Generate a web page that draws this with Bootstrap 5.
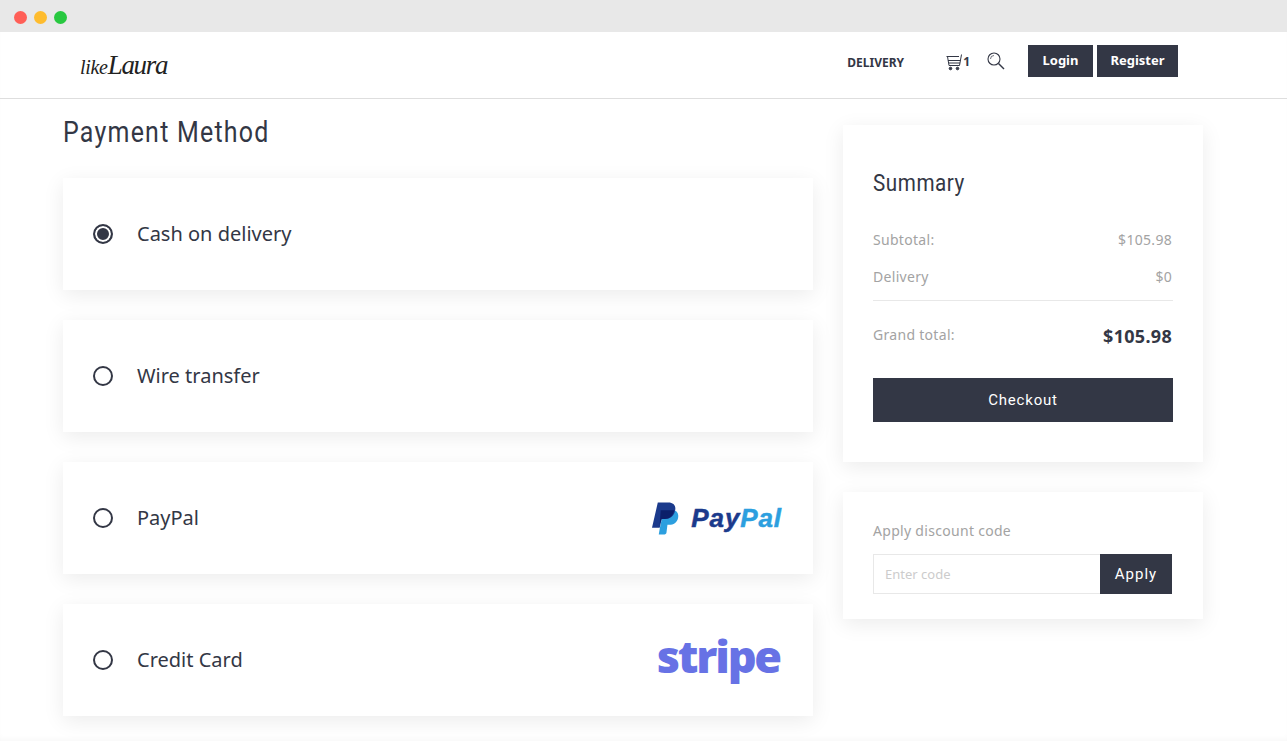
<!DOCTYPE html>
<html lang="en">
  <head>
    <meta charset="UTF-8" />
    <meta name="viewport" content="width=device-width, initial-scale=1" />
    <title>Payment Method</title>
    <link href="https://cdn.jsdelivr.net/npm/bootstrap@5.3.3/dist/css/bootstrap.min.css" rel="stylesheet" />
    <style>
      body { font-family: "Noto Sans", sans-serif; color: #333745; background: #fff; overflow: hidden; height: 741px; box-shadow: inset 0 -4px 6px -3px rgba(0,0,0,.04); }
      .title-bar { height: 32px; background: #e8e8e8; padding: 2px 0 0 14px; gap: 7px; }
      .win-dot { width: 13px; height: 13px; border-radius: 50%; }
      .dot-red { background: #ff5f57; }
      .dot-amber { background: #febc2e; }
      .dot-green { background: #28c840; }
      .top-nav { height: 67px; border-bottom: 1px solid #dedede; padding: 0 109px 0 80px; }
      .brand-text { font-family: "Liberation Serif", serif; font-style: italic; font-size: 20px; letter-spacing: -.3px; color: #222; text-decoration: none; line-height: 1; white-space: nowrap; }
      .brand-text span { font-size: 27px; letter-spacing: -1.3px; }
      .nav-right { padding-bottom: 8px; }
      .nav-delivery { font-size: 12px; font-weight: 700; color: #333745; text-decoration: none; margin: 4px 42px 0 0; }
      .cart-wrap { margin-top: 2px; }
      .cart-count { font-size: 12px; font-weight: 700; margin-right: 17px; }
      .search-icon { margin-right: 23px; }
      .nav-btn { background: #333745; color: #fff; border: 0; border-radius: 0; height: 32px; font-size: 13px; font-weight: 700; padding: 0; }
      .btn-login { width: 65px; }
      .btn-register { width: 81px; }
      .page-wrap { padding: 26px 0 0 63px; gap: 30px; }
      .left-col { width: 750px; }
      .right-col { width: 360px; }
      .page-title { font-family: Roboto, sans-serif; font-size: 29px; font-weight: 400; line-height: 34px; letter-spacing: 1.45px; margin: -10px 0 29px; transform-origin: left; transform: scaleX(.86); white-space: nowrap; }
      .pay-card { height: 112px; background: #fff; box-shadow: 0 5px 20px rgba(0,0,0,.08); margin-bottom: 30px; padding: 0 31px 0 30px; }
      .pay-radio { appearance: none; width: 20px; height: 20px; border: 2px solid #333745; border-radius: 50%; margin: 0 24px 0 0; flex: none; background: #fff; }
      .pay-radio:checked { background: #333745; box-shadow: inset 0 0 0 2px #fff; }
      .pay-label { font-size: 20px; margin: 0; line-height: 1; }
      .paypal-logo { gap: 11px; }
      .paypal-word { font-family: "Liberation Sans", sans-serif; font-weight: 700; font-style: italic; font-size: 26px; letter-spacing: .9px; color: #1b3a8c; line-height: 1; -webkit-text-stroke: .5px currentColor; }
      .paypal-word span { color: #2c9fdf; }
      .stripe-word { font-family: "Open Sans", sans-serif; font-weight: 800; font-size: 45px; letter-spacing: -2.2px; color: #6772e5; line-height: 1; margin: -10px 2px 0 auto; }
      .side-card { background: #fff; box-shadow: 0 5px 20px rgba(0,0,0,.08); padding: 30px; }
      .discount-card { margin-top: 30px; padding-bottom: 25px; }
      .summary-title { font-family: Roboto, sans-serif; font-size: 24px; font-weight: 400; line-height: 30px; letter-spacing: .65px; margin: 13px 0 31px; transform-origin: left; transform: scaleX(.86); }
      .sum-row { font-size: 14px; color: #a3a3a3; letter-spacing: .3px; padding-right: 1px; }
      .grand-row { padding-right: 0; }
      .grand-label { margin-top: -4px; }
      .sum-line { border-color: #e8e8e8; opacity: 1; margin: 13px 0 22px; }
      .grand-val { font-size: 18px; font-weight: 700; color: #333745; letter-spacing: .3px; padding-right: 1px; }
      .checkout-btn { background: #333745; color: #fff; border: 0; border-radius: 0; height: 44px; font-family: Roboto, sans-serif; font-size: 15px; letter-spacing: .8px; margin: 28px 0 10px; }
      .discount-label { font-size: 14px; color: #a3a3a3; letter-spacing: .3px; margin-bottom: 14px; line-height: 18px; }
      .code-input { border: 1px solid #e8e8e8; border-right: 0; border-radius: 0; height: 40px; font-size: 13px; padding: 0 11px; }
      .code-input::placeholder { color: #ccc; }
      .apply-btn { background: #333745; color: #fff; border: 0; border-radius: 0; width: 72px; height: 40px; font-family: Roboto, sans-serif; font-size: 15px; letter-spacing: 1px; padding: 0; margin-right: 1px; }
    </style>
  </head>
  <body>
    <div class="title-bar d-flex align-items-center">
      <span class="win-dot dot-red"></span>
      <span class="win-dot dot-amber"></span>
      <span class="win-dot dot-green"></span>
    </div>

    <!-- Header -->
    <nav class="top-nav d-flex align-items-center">
      <a href="#" class="brand-text">like<span>Laura</span></a>
      <div class="nav-right ms-auto d-flex align-items-center">
        <a href="#" class="nav-delivery">DELIVERY</a>
        <div class="cart-wrap d-flex align-items-center">
          <svg width="17" height="17" viewBox="0 0 17 17" fill="none" stroke="#333745" stroke-width="1">
            <path d="M.5 2.5H13M15.5.5 13.5 11.5H3L1.5 2.5M2 6.5H14.5M3 9H14" />
            <circle cx="4.5" cy="14.5" r="1.3" fill="#333745" />
            <circle cx="11.5" cy="14.5" r="1.3" fill="#333745" />
          </svg>
          <span class="cart-count">1</span>
        </div>
        <svg class="search-icon" width="18" height="18" viewBox="0 0 18 18" fill="none" stroke="#333745" stroke-width="1.1">
          <circle cx="7" cy="7" r="6" />
          <path d="M3.5 7A3.5 3.5 0 0 1 7 3.5" stroke-width=".7" />
          <path d="M11.5 11.5 17 17" stroke-width="1.4" />
        </svg>
        <button class="nav-btn btn-login">Login</button>
        <button class="nav-btn btn-register ms-1">Register</button>
      </div>
    </nav>

    <div class="page-wrap d-flex align-items-start">
      <div class="left-col">
        <h1 class="page-title">Payment Method</h1>

        <div class="pay-card d-flex align-items-center">
          <input class="pay-radio" type="radio" name="pay" id="payCash" checked />
          <label class="pay-label" for="payCash">Cash on delivery</label>
        </div>
        <div class="pay-card d-flex align-items-center">
          <input class="pay-radio" type="radio" name="pay" id="payWire" />
          <label class="pay-label" for="payWire">Wire transfer</label>
        </div>
        <div class="pay-card d-flex align-items-center">
          <input class="pay-radio" type="radio" name="pay" id="payPal" />
          <label class="pay-label" for="payPal">PayPal</label>
          <div class="paypal-logo ms-auto d-flex align-items-center">
            <svg width="28" height="33" viewBox="0 0 29 33">
              <path fill="#2c9fdf" d="M23 8c3 1 5 4 4 8-1 5-5 7-9 7h-2l-1 8c0 1-1 2-2 2H7l1-6 4-19z" />
              <path fill="#1b3a8c" d="M6 0h11c5 0 8 3 7 8-1 6-5 9-11 9h-3l-2 9H0z" />
              <path fill="#0b1f6a" d="M9 8h14c-1 6-5 9-10 9h-3l-2 6z" />
            </svg>
            <span class="paypal-word">Pay<span>Pal</span></span>
          </div>
        </div>
        <div class="pay-card d-flex align-items-center">
          <input class="pay-radio" type="radio" name="pay" id="payCard" />
          <label class="pay-label" for="payCard">Credit Card</label>
          <span class="stripe-word">stripe</span>
        </div>
      </div>

      <div class="right-col">
        <div class="side-card">
          <div class="summary-title">Summary</div>
          <div class="sum-row d-flex justify-content-between mb-3"><span>Subtotal:</span><span>$105.98</span></div>
          <div class="sum-row d-flex justify-content-between"><span>Delivery</span><span>$0</span></div>
          <hr class="sum-line" />
          <div class="sum-row grand-row d-flex justify-content-between align-items-center"><span class="grand-label">Grand total:</span><span class="grand-val">$105.98</span></div>
          <button class="checkout-btn w-100 d-block">Checkout</button>
        </div>
        <div class="side-card discount-card">
          <div class="discount-label">Apply discount code</div>
          <div class="d-flex">
            <input class="code-input form-control" type="text" placeholder="Enter code" />
            <button class="apply-btn flex-shrink-0">Apply</button>
          </div>
        </div>
      </div>
    </div>

    <script src="https://cdn.jsdelivr.net/npm/bootstrap@5.3.3/dist/js/bootstrap.bundle.min.js"></script>
  </body>
</html>
